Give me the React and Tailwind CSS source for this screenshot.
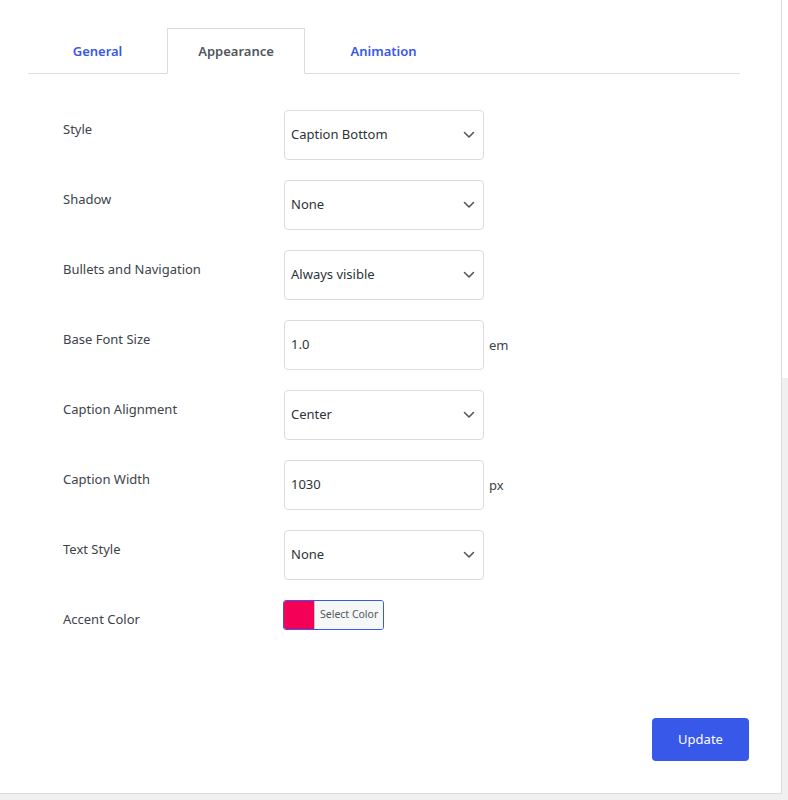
import React, { useState } from 'react';

const fields = [
  { label: 'Style', type: 'select', value: 'Caption Bottom' },
  { label: 'Shadow', type: 'select', value: 'None' },
  { label: 'Bullets and Navigation', type: 'select', value: 'Always visible' },
  { label: 'Base Font Size', type: 'input', value: '1.0', unit: 'em' },
  { label: 'Caption Alignment', type: 'select', value: 'Center' },
  { label: 'Caption Width', type: 'input', value: '1030', unit: 'px' },
  { label: 'Text Style', type: 'select', value: 'None' },
];

const Chevron = () => (
  <svg width="12" height="8" viewBox="0 0 12 8" fill="none" stroke="#50575e" strokeWidth="1.6" strokeLinecap="round" strokeLinejoin="round">
    <polyline points="1.5,1.5 6,6 10.5,1.5" />
  </svg>
);

const App = () => {
  const [tab, setTab] = useState('Appearance');
  const tabs = [
    { name: 'General', w: 'w-[139px]' },
    { name: 'Appearance', w: 'w-[138px]' },
    { name: 'Animation', w: 'w-[157px]' },
  ];

  return (
    <div className="min-h-[800px] w-[788px] bg-[#f0f0f1] flex items-start" style={{ fontFamily: '"Noto Sans", "Open Sans", sans-serif' }}>
      {/* --- CARD --- */}
      <div className="w-[782px] bg-white border-r border-b border-[#dcdcde] pl-[28px] pt-[28px] pr-[32px] pb-[32px] flex flex-col">
        {/* Tabs */}
        <div className="w-[712px] flex border-b border-[#dcdcde]">
          {tabs.map((t) => (
            <button
              key={t.name}
              onClick={() => setTab(t.name)}
              className={`${t.w} h-[46px] pt-[1px] text-[13px] font-semibold -mb-px ${
                tab === t.name
                  ? 'text-[#50575e] bg-white border border-[#dcdcde] border-b-white'
                  : 'text-[#3858e9] border border-transparent'
              }`}
            >
              {t.name}
            </button>
          ))}
        </div>

        {/* Form rows */}
        <div className="pl-[35px] pt-[36px] flex flex-col gap-[20px]">
          {fields.map((f) => (
            <div key={f.label} className="flex items-start">
              <div className="w-[221px] pt-[9px] text-[13px] text-[#3c434a] leading-[20px]">{f.label}</div>
              <div className="flex items-center">
                <div className="w-[200px] h-[50px] border border-[#dcdcde] rounded-[4px] bg-white flex items-center justify-between pl-[6px] pr-[8px] text-[13px] text-[#2c3338]">
                  <span>{f.value}</span>
                  {f.type === 'select' && <Chevron />}
                </div>
                {f.unit && <span className="ml-[5px] text-[13px] text-[#3c434a] pt-[2px]">{f.unit}</span>}
              </div>
            </div>
          ))}

          {/* Accent color */}
          <div className="flex items-start">
            <div className="w-[220px] pt-[9px] text-[13px] text-[#3c434a] leading-[20px]">Accent Color</div>
            <button className="h-[30px] flex border border-[#3858e9] rounded-[3px] overflow-hidden">
              <span className="w-[30px] h-full bg-[#f50057]"></span>
              <span className="h-full bg-[#f6f7f7] border-l border-[#c3c4c7] px-[5px] flex items-center text-[10.5px] text-[#50575e]">Select Color</span>
            </button>
          </div>
        </div>

        <div className="flex justify-end mt-[88px]">
          <button className="w-[97px] h-[43px] bg-[#3858e9] text-white text-[13px] rounded-[4px]">Update</button>
        </div>
      </div>

      <div className="w-[6px] flex flex-col">
        <div className="h-[378px] bg-white"></div>
      </div>
    </div>
  );
};

export default App;
